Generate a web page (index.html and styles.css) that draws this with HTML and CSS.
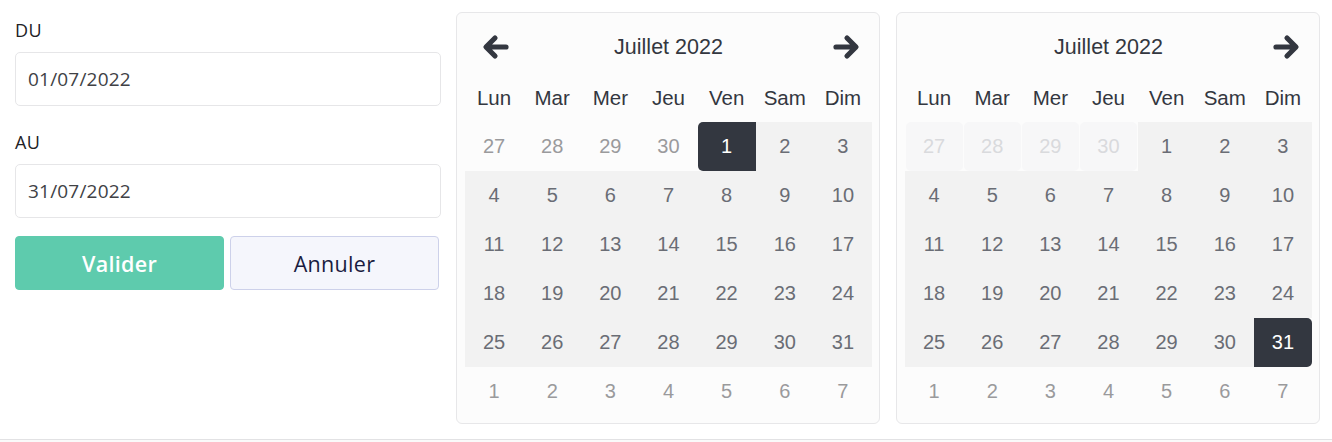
FILE: index.html
```html
<!DOCTYPE html>
<html lang="fr">
<head>
<meta charset="utf-8">
<title>Période</title>
<link rel="stylesheet" href="styles.css">
</head>
<body>
<div class="page">
  <div class="form">
    <label class="label lbl-first">DU</label>
    <input class="field" type="text" value="01/07/2022">
    <label class="label lbl-second">AU</label>
    <input class="field" type="text" value="31/07/2022">
    <div class="actions">
      <button class="btn btn-ok">Valider</button>
      <button class="btn btn-cancel">Annuler</button>
    </div>
  </div>

  <div class="cal">
    <div class="cal-head">
      <span class="nav nav-prev"><svg width="28" height="26" viewBox="0 0 28 26"><path d="M24 13H5M13 4L4 13L13 22" fill="none" stroke="#333740" stroke-width="5.2" stroke-linecap="round" stroke-linejoin="round"/></svg></span>
      <span class="title">Juillet 2022</span>
      <span class="nav nav-next"><svg width="28" height="26" viewBox="0 0 28 26"><path d="M4 13H23M15 4L24 13L15 22" fill="none" stroke="#333740" stroke-width="5.2" stroke-linecap="round" stroke-linejoin="round"/></svg></span>
    </div>
    <div class="grid">
      <div class="dow">Lun</div><div class="dow">Mar</div><div class="dow">Mer</div><div class="dow">Jeu</div><div class="dow">Ven</div><div class="dow">Sam</div><div class="dow">Dim</div>
      <div class="d out">27</div><div class="d out">28</div><div class="d out">29</div><div class="d out">30</div><div class="d sel start">1</div><div class="d in">2</div><div class="d in">3</div>
      <div class="d in">4</div><div class="d in">5</div><div class="d in">6</div><div class="d in">7</div><div class="d in">8</div><div class="d in">9</div><div class="d in">10</div>
      <div class="d in">11</div><div class="d in">12</div><div class="d in">13</div><div class="d in">14</div><div class="d in">15</div><div class="d in">16</div><div class="d in">17</div>
      <div class="d in">18</div><div class="d in">19</div><div class="d in">20</div><div class="d in">21</div><div class="d in">22</div><div class="d in">23</div><div class="d in">24</div>
      <div class="d in">25</div><div class="d in">26</div><div class="d in">27</div><div class="d in">28</div><div class="d in">29</div><div class="d in">30</div><div class="d in">31</div>
      <div class="d out">1</div><div class="d out">2</div><div class="d out">3</div><div class="d out">4</div><div class="d out">5</div><div class="d out">6</div><div class="d out">7</div>
    </div>
  </div>

  <div class="cal">
    <div class="cal-head">
      <span class="nav nav-prev"></span>
      <span class="title">Juillet 2022</span>
      <span class="nav nav-next"><svg width="28" height="26" viewBox="0 0 28 26"><path d="M4 13H23M15 4L24 13L15 22" fill="none" stroke="#333740" stroke-width="5.2" stroke-linecap="round" stroke-linejoin="round"/></svg></span>
    </div>
    <div class="grid">
      <div class="dow">Lun</div><div class="dow">Mar</div><div class="dow">Mer</div><div class="dow">Jeu</div><div class="dow">Ven</div><div class="dow">Sam</div><div class="dow">Dim</div>
      <div class="d dis">27</div><div class="d dis">28</div><div class="d dis">29</div><div class="d dis">30</div><div class="d in">1</div><div class="d in">2</div><div class="d in">3</div>
      <div class="d in">4</div><div class="d in">5</div><div class="d in">6</div><div class="d in">7</div><div class="d in">8</div><div class="d in">9</div><div class="d in">10</div>
      <div class="d in">11</div><div class="d in">12</div><div class="d in">13</div><div class="d in">14</div><div class="d in">15</div><div class="d in">16</div><div class="d in">17</div>
      <div class="d in">18</div><div class="d in">19</div><div class="d in">20</div><div class="d in">21</div><div class="d in">22</div><div class="d in">23</div><div class="d in">24</div>
      <div class="d in">25</div><div class="d in">26</div><div class="d in">27</div><div class="d in">28</div><div class="d in">29</div><div class="d in">30</div><div class="d sel end">31</div>
      <div class="d out">1</div><div class="d out">2</div><div class="d out">3</div><div class="d out">4</div><div class="d out">5</div><div class="d out">6</div><div class="d out">7</div>
    </div>
  </div>
</div>
<div class="footline"></div>
</body>
</html>
```

FILE: styles.css
```css
html, body {
  margin: 0;
  padding: 0;
  background: #ffffff;
}
body {
  width: 1332px;
  height: 442px;
  overflow: hidden;
  position: relative;
}
.page {
  display: flex;
  align-items: flex-start;
  padding: 12px 0 0 15px;
  gap: 16px;
}
.form {
  flex: none;
  width: 426px;
  margin-right: -1px;
  display: flex;
  flex-direction: column;
  font-family: "Open Sans", "Liberation Sans", sans-serif;
}
.label {
  display: block;
  font-size: 18px;
  font-weight: 500;
  line-height: 22px;
  color: #222226;
  letter-spacing: 0.4px;
}
.lbl-first { margin-top: 7px; margin-bottom: 11px; }
.lbl-second { margin-top: 25px; margin-bottom: 11px; }
.field {
  box-sizing: border-box;
  width: 426px;
  height: 54px;
  margin: 0;
  padding: 0 12px;
  border: 1px solid #e6e6e8;
  border-radius: 5px;
  background: #ffffff;
  font-family: "Open Sans", "Liberation Sans", sans-serif;
  font-size: 19px;
  font-weight: 500;
  letter-spacing: 0.2px;
  color: #404145;
  outline: none;
}
.actions {
  display: flex;
  gap: 6px;
  margin-top: 18px;
}
.btn {
  box-sizing: border-box;
  width: 209px;
  height: 54px;
  border-radius: 4px;
  font-family: "Open Sans", "Liberation Sans", sans-serif;
  font-size: 21.5px;
  letter-spacing: 0.3px;
  cursor: pointer;
}
.btn-ok {
  background: #5ecbad;
  border: 1px solid #5ecbad;
  color: #ffffff;
  font-weight: 600;
}
.btn-cancel {
  background: #f5f6fc;
  border: 1px solid #cdd1ea;
  color: #1a1c40;
  font-weight: 500;
}
.cal {
  flex: none;
  box-sizing: border-box;
  width: 424px;
  height: 412px;
  padding: 8px 7px 7px 8px;
  border: 1px solid #e7e7e9;
  border-radius: 6px;
  background: #fcfcfc;
  font-family: "Liberation Sans", Arial, sans-serif;
}
.cal-head {
  display: grid;
  grid-template-columns: 58px 1fr 58px;
  align-items: center;
  height: 52px;
  color: #333740;
}
.nav {
  display: flex;
  justify-content: center;
  align-items: center;
}
.nav-prev { padding-left: 4px; }
.nav-next { padding-left: 6px; }
.title {
  text-align: center;
  font-size: 21.5px;
}
.grid {
  display: grid;
  grid-template-columns: repeat(7, 1fr);
  grid-auto-rows: 49px;
}
.dow {
  height: 50px;
  display: flex;
  align-items: center;
  justify-content: center;
  font-size: 20.5px;
  color: #333740;
}
.d {
  display: flex;
  align-items: center;
  justify-content: center;
  font-size: 20px;
}
.out { color: #9a9a9c; }
.in { background: #f2f2f2; color: #6a6d75; }
.dis {
  background: #f7f7f8;
  color: #d9dadd;
  border-radius: 5px;
  margin: 0 0.5px;
}
.sel { background: #333740; color: #ffffff; }
.start { border-radius: 5px 0 0 5px; }
.end { border-radius: 0 5px 5px 0; }
.footline {
  position: absolute;
  left: 0;
  right: 0;
  bottom: 0;
  height: 2px;
  border-top: 1px solid #e2e2e4;
  background: #fafafa;
}
```
